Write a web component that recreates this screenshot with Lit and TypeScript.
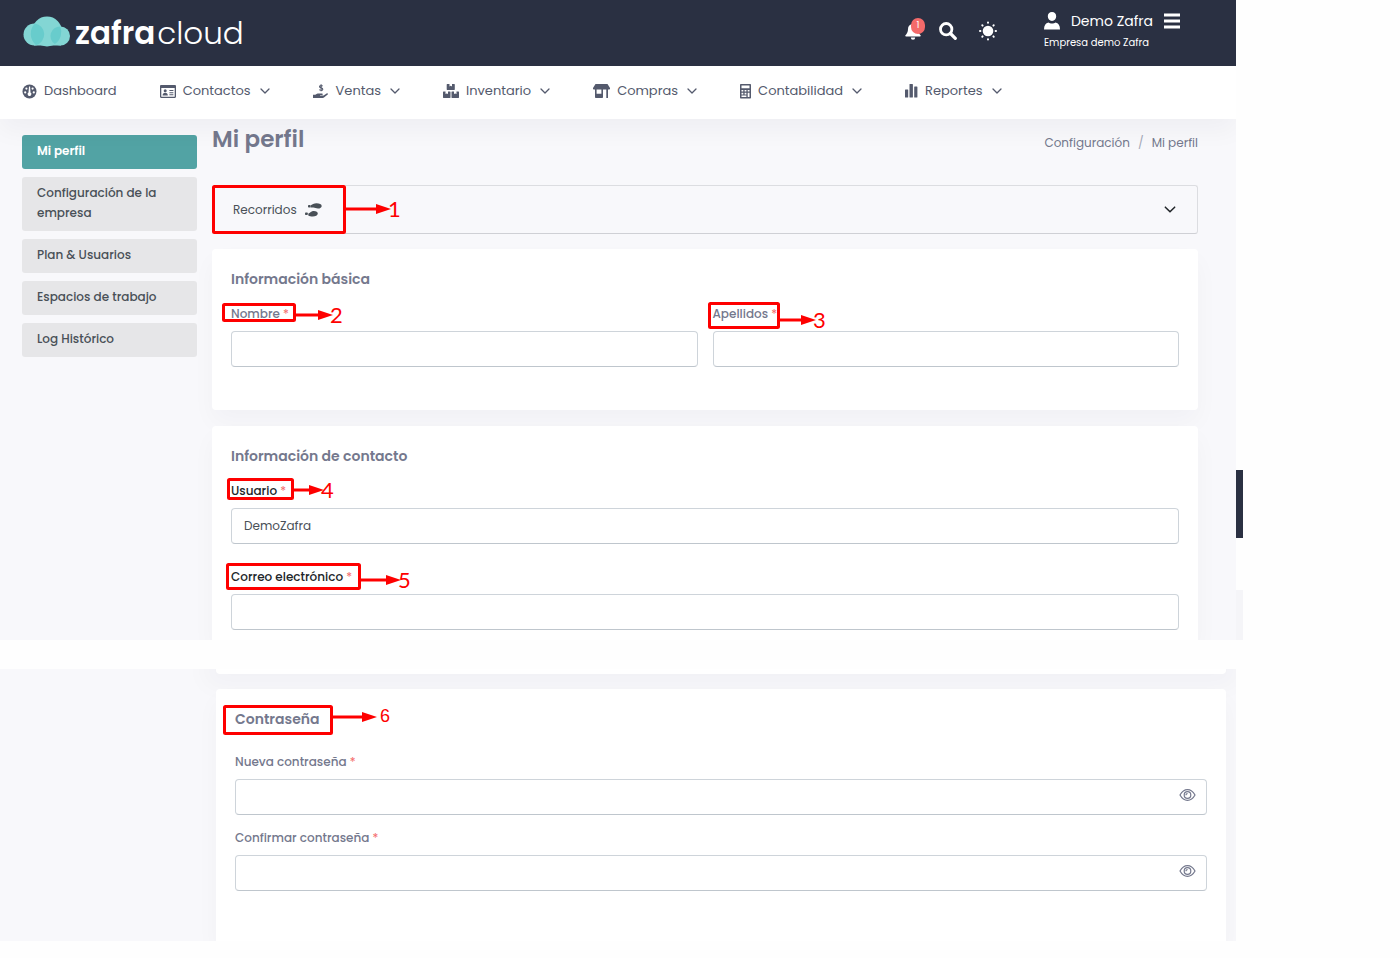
import { LitElement, html, css, svg, nothing } from "lit";
import { customElement, property } from "lit/decorators.js";

const chevron = html`<svg class="chev" viewBox="0 0 10 6" aria-hidden="true"><path d="M1 1l4 4 4-4" fill="none" stroke="currentColor" stroke-width="1.3" stroke-linecap="round" stroke-linejoin="round"/></svg>`;

const icons: Record<string, unknown> = {
  dashboard: svg`<circle cx="7.5" cy="7.5" r="7"/><g fill="#fff"><circle cx="3.2" cy="8.4" r="1.1"/><circle cx="4.4" cy="4.6" r="1.1"/><circle cx="10.6" cy="4.6" r="1.1"/><circle cx="11.8" cy="8.4" r="1.1"/><path d="M7 2.6h1.1l.4 5.8a1.9 1.9 0 1 1-2 0z"/></g>`,
  contacts: svg`<path fill-rule="evenodd" d="M1.200 1h13.600c.7 0 1.200.5 1.200 1.200v10.600c0 .7-.5 1.200-1.200 1.200H1.200C.5 14 0 13.500 0 12.800V2.200C0 1.500.5 1 1.200 1zM1.300 4v8.700h13.400V4z"/><circle cx="5.200" cy="6.700" r="1.500"/><path d="M2.600 11.400c0-1.600 1-2.600 2.600-2.600s2.600 1 2.600 2.600zM9.400 6h4v1h-4zM9.400 8.200h4v1h-4zM9.400 10.300h4v1h-4z"/>`,
  sales: svg`<path d="M0 10.800h2.300c1.200-1 2.200-1.300 3.400-1.300h3.200c1.300 0 1.300 1.500 0 1.500H7v.5h3.600l3-2.100c1-.6 1.900.5 1.100 1.200l-3.400 2.700c-.5.400-1 .6-1.600.6H0z"/><path d="M9.600 2.200C9 1.500 6.500 1.200 6.500 2.700c0 1.600 3.300.8 3.300 2.500 0 1.500-2.600 1.400-3.500.5M8.100.300v7" fill="none" stroke="currentColor" stroke-width="1.100"/>`,
  inventory: svg`<path d="M4.200 0h2.300v2.400l1.200-.7 1.300.7V0h2.300c.3 0 .5.200.5.500v5c0 .3-.2.500-.5.500H4.200c-.3 0-.5-.2-.5-.5v-5c0-.3.200-.5.500-.5zM.5 7.500h2v2.600l1.300-.7 1.200.7V7.500h2c.3 0 .5.200.5.500v5.500c0 .3-.2.500-.5.500H.5c-.3 0-.5-.2-.5-.5V8c0-.3.200-.5.500-.5zM9 7.500h2v2.600l1.200-.7 1.300.7V7.500h2c.3 0 .5.200.5.500v5.500c0 .3-.2.500-.5.500H9c-.3 0-.5-.2-.5-.5V8c0-.3.200-.5.500-.5z"/>`,
  purchases: svg`<path fill-rule="evenodd" d="M2.500 0h12L17 4c.4.700 0 1.500-.8 1.500H.8C0 5.500-.4 4.700 0 4zM2 5.500h1.600v4.300h4.800V5.500H10v7.700c0 .4-.3.800-.8.800H2.800c-.5 0-.8-.4-.8-.8zM13.300 5.500H15V14h-1.700z"/>`,
  accounting: svg`<path fill-rule="evenodd" d="M1 0h9c.6 0 1 .4 1 1v12.500c0 .6-.4 1-1 1H1c-.6 0-1-.4-1-1V1c0-.6.400-1 1-1zM1.500 1.600v2.700h8V1.600zM1.500 6v1.600h1.800V6zM4.600 6v1.600h1.800V6zM7.700 6v1.600h1.800V6zM1.500 8.800v1.600h1.800V8.800zM4.600 8.800v1.600h1.800V8.800zM7.700 8.800v4.200h1.800V8.800zM1.500 11.500V13h4.900v-1.500z"/>`,
  reports: svg`<rect x="0" y="5.500" width="3.200" height="8" rx=".5"/><rect x="4.500" y="0" width="3.400" height="13.500" rx=".5"/><rect x="9.200" y="2.500" width="3.200" height="11" rx=".5"/>`,
};

const nav = [
  { text: "Dashboard", icon: "dashboard", w: 15, menu: false },
  { text: "Contactos", icon: "contacts", w: 16, menu: true },
  { text: "Ventas", icon: "sales", w: 16, menu: true },
  { text: "Inventario", icon: "inventory", w: 16, menu: true },
  { text: "Compras", icon: "purchases", w: 17, menu: true },
  { text: "Contabilidad", icon: "accounting", w: 11, menu: true },
  { text: "Reportes", icon: "reports", w: 13, menu: true },
];

const side = ["Mi perfil", "Configuración de la empresa", "Plan & Usuarios", "Espacios de trabajo", "Log Histórico"];

/** Red frame, arrow and number laid over the element that it explains. */
@customElement("call-out")
export class CallOut extends LitElement {
  @property() n = "";
  @property({ type: Number }) w = 0;
  @property({ type: Number }) h = 0;
  @property({ type: Number }) len = 40;
  @property({ type: Number }) at = 10;

  static styles = css`
    :host { position: absolute; pointer-events: none; z-index: 2; }
    svg { display: block; overflow: visible; }
    rect { fill: none; stroke: #fe0000; stroke-width: 3; }
    line { stroke: #fe0000; stroke-width: 3; }
    path { fill: #fe0000; }
    text { fill: #fe0000; font: 400 22px Lato, sans-serif; }
    .plain { font: 400 18px "Liberation Sans", sans-serif; }
  `;

  render() {
    const { w, h, len, at, n } = this;
    const end = w + len;
    return html`<svg width=${w} height=${h}>
      <rect x="1.500" y="1.500" width=${w - 3} height=${h - 3} rx="1" />
      <line x1=${w} y1=${at} x2=${end - 13} y2=${at} />
      <path d="M${end - 15} ${at - 5}L${end} ${at}L${end - 15} ${at + 5}z" />
      <text class=${n === "6" ? "plain" : ""} x=${n === "6" ? end + 3 : end - 3} y=${at + (n === "6" ? 5 : 8)}>${n}</text>
    </svg>`;
  }
}

@customElement("app-root")
export class AppRoot extends LitElement {
  static styles = css`
    :host { display: block; background: #fefefe; font: 12px/20px Poppins, Inter, sans-serif; font-feature-settings: "cv11"; color: #495057; }
    * { box-sizing: border-box; }
    a { color: inherit; text-decoration: none; }
    button { font: inherit; font-feature-settings: inherit; color: inherit; border: 0; background: none; padding: 0; cursor: pointer; text-align: left; }
    svg { display: block; flex: none; }
    h1, h2 { margin: 0; font-weight: 600; color: #74788d; }
    .page { padding-right: 164px; min-height: 958px; }

    .top { height: 66px; background: #2a3042; color: #fff; display: flex; align-items: center; justify-content: space-between; padding: 0 56px 0 23px; }
    .logo { display: flex; align-items: center; gap: 5px; font-size: 31px; line-height: 40px; }
    .logo svg { margin-bottom: 2px; }
    .logo div { display: flex; gap: 2px; }
    .logo b { font-weight: 600; }
    .logo span { font-weight: 300; }
    .tools { display: flex; align-items: center; gap: 18px; padding-bottom: 4px; }
    .bell { position: relative; }
    .badge { position: absolute; right: -4px; top: -5px; width: 14px; height: 16px; border-radius: 8px; background: #f46a6a; font-size: 9px; line-height: 15px; text-align: center; }
    .user { margin-left: 25px; }
    .who { display: flex; align-items: center; gap: 11px; font-size: 14px; line-height: 24px; }
    .firm { font-size: 10px; line-height: 20px; }

    nav { height: 53px; background: #fff; display: flex; align-items: center; gap: 43px; padding: 0 22px 3px; color: #545a6d; box-shadow: 0 12px 24px rgba(18, 38, 63, .04); clip-path: inset(0 0 -40px 0); position: relative; z-index: 1; font-size: 13px; }
    nav a { display: flex; align-items: center; gap: 7px; white-space: nowrap; }
    nav svg { fill: currentColor; }
    .chev { width: 10px; height: 6px; margin-left: 2px; }

    .pane { background: #f8f8fb; display: grid; grid-template-columns: 175px minmax(0, 1fr); position: relative; }
    .first { padding: 0 38px 0 22px; column-gap: 15px; clip-path: inset(0 -7px 0 0); }
    .side { display: flex; flex-direction: column; gap: 8px; padding-top: 16px; }
    .side a { background: #e6e6e8; border-radius: 3px; padding: 6px 15px 8px; font-weight: 500; }
    .side a.on { background: #52a3a4; color: #fff; font-weight: 600; }
    .head { display: flex; justify-content: space-between; height: 66px; }
    h1 { font-size: 23px; line-height: 41px; }
    .crumbs { display: flex; gap: 8px; color: #74788d; line-height: 48px; }
    .crumbs i { font-style: normal; color: #a6a9b8; }

    .acc { position: relative; border: 1px solid #dcdde1; border-bottom-color: #cfd0d5; border-radius: 3px; margin-bottom: 15px; }
    .acc button { width: 100%; height: 47px; display: flex; align-items: center; padding: 0 21px 0 20px; gap: 8px; }
    .acc .chev { width: 12px; height: 7px; margin-left: auto; color: #212529; }

    .card { background: #fff; border-radius: 4px; padding: 19px; box-shadow: 0 12px 24px rgba(18, 38, 63, .03); }
    .basic { padding-bottom: 43px; margin-bottom: 16px; }
    .contact { padding-bottom: 10px; border-radius: 4px 4px 0 0; }
    h2 { font-size: 14px; line-height: 22px; margin-bottom: 15px; position: relative; }
    .cols { display: grid; grid-template-columns: 1fr 1fr; gap: 15px; }
    .fields { display: grid; gap: 24px; }
    .field { position: relative; }
    .name { display: block; line-height: 18px; margin-bottom: 8px; color: #74788d; font-weight: 500; }
    .dark .name { color: #212529; }
    .name em { color: #f46a6a; font-style: normal; font-weight: 400; }
    input { display: block; width: 100%; height: 36px; border: 1px solid #ced4da; border-bottom-color: #bfc6cd; border-radius: 4px; background: #fff; padding: 0 12px; font: inherit; font-feature-settings: inherit; color: #495057; outline: 0; }
    .box { position: relative; }
    .eye { position: absolute; right: 11px; top: 9px; }

    .edge { position: absolute; left: 100%; width: 7px; }
    .bar { bottom: 102px; height: 68px; background: #2a3042; }
    .strip { bottom: 0; height: 50px; background: #f5f5f8; }

    .second { margin-top: 29px; padding-right: 10px; grid-template-columns: 216px minmax(0, 1fr); overflow: hidden; }
    .second > div { grid-column: 2; }
    .tail { height: 5px; background: #fff; border-radius: 0 0 4px 4px; margin-bottom: 15px; box-shadow: 0 0 24px 12px rgba(18, 38, 63, .03); }
    .pass { padding-bottom: 50px; border-radius: 4px 4px 0 0; }
    .pass h2 { margin-bottom: 23px; }
    .pass .fields { gap: 14px; }

    .c1 { left: -1px; top: -1px; }
    .c2 { left: -9px; top: -2px; }
    .c3 { left: -5px; top: -3px; }
    .c4 { left: -4px; top: -4px; }
    .c5 { left: -5px; top: -5px; }
    .c6 { left: -12px; top: -3px; }
  `;

  private field(id: string, label: string, note: unknown, value = "", type = "text") {
    return html`<div class="field">
      <label class="name" for=${id}>${label} <em>*</em></label>
      <div class="box">
        <input id=${id} type=${type} .value=${value} />
        ${type === "password"
          ? html`<button class="eye" aria-label="Mostrar"><svg width="17" height="14" viewBox="0 0 17 14" fill="none" stroke="#74788d" stroke-width="1.200"><path d="M1 7c2-3.600 4.500-5.400 7.500-5.400S14 3.400 16 7c-2 3.600-4.500 5.400-7.500 5.400S3 10.600 1 7z"/><circle cx="8.500" cy="7" r="3.300"/><path d="M7 7.200A1.600 1.600 0 0 1 8.600 5.500"/></svg></button>`
          : nothing}
      </div>
      ${note}
    </div>`;
  }

  render() {
    return html`<div class="page">
      <header class="top">
        <a class="logo" href="#">
          <svg width="47" height="32" viewBox="0 0 47 32"><g fill="#83d6d4"><circle cx="11.500" cy="18.500" r="11"/><circle cx="24" cy="15.500" r="15"/><circle cx="37.500" cy="20" r="9.500"/><rect x="11" y="20" width="27" height="9.500"/></g><g fill="#68cccc"><path d="M12 7.500a11 11 0 0 1 1 21.500 14.500 14.500 0 0 1-1-21.500z"/><path d="M37.300 10.500a9.500 9.500 0 0 0-5.500 17.500A14.500 14.500 0 0 0 37.300 10.500z"/></g></svg>
          <div><b>zafra</b><span>cloud</span></div>
        </a>
        <div class="tools">
          <button class="bell" aria-label="Notificaciones"><svg width="16" height="17" viewBox="0 0 16 17" fill="#fff"><path d="M8 0c.6 0 1 .4 1 1 2.500.5 4 2.400 4 5 0 3 1 4.500 2.500 6.200.6.700.2 1.300-.6 1.300H1.100c-.8 0-1.200-.6-.6-1.300C2 10.500 3 9 3 6c0-2.600 1.500-4.500 4-5 0-.6.400-1 1-1zM5.800 14.600h4.400a2.200 2.200 0 0 1-4.400 0z"/></svg><span class="badge">1</span></button>
          <button aria-label="Buscar"><svg width="18" height="18" viewBox="0 0 18 18" fill="none" stroke="#fff"><circle cx="7.200" cy="7.200" r="5.700" stroke-width="2.800"/><path d="M11.500 11.500l4.800 4.800" stroke-width="3.200" stroke-linecap="round"/></svg></button>
          <button aria-label="Tema"><svg width="26" height="20" viewBox="0 0 26 20" fill="#fff"><circle cx="13" cy="10" r="5.300"/><g stroke="#fff" stroke-width="2" stroke-linecap="round"><path d="M13 1.400v.4M13 18.200v.4M5 10h.4M20.600 10h.4M7.300 4.300l.3.300M18.400 15.400l.3.300M7.300 15.700l.3-.3M18.400 4.600l.3-.3"/></g></svg></button>
          <div class="user">
            <div class="who"><svg width="16" height="18" viewBox="0 0 16 18" fill="#fff"><path d="M8 0c2.600 0 4.200 1.700 4.200 4.300S10.600 9 8 9 3.800 6.900 3.800 4.300 5.400 0 8 0zM0 17.500c0-4 1.500-6.500 4.500-7 1 .6 2 1 3.500 1s2.500-.4 3.500-1c3 .5 4.500 3 4.500 7z"/></svg><span>Demo Zafra</span><svg width="16" height="16" viewBox="0 0 16 16" fill="#fff"><path d="M0 .500h16v3H0zM0 6.500h16v3H0zM0 12.500h16v3H0z"/></svg></div>
            <div class="firm">Empresa demo Zafra</div>
          </div>
        </div>
      </header>
      <nav>
        ${nav.map((i) => html`<a href="#"><svg width=${i.w} height="15" viewBox="0 0 ${i.w} 15">${icons[i.icon]}</svg><span>${i.text}</span>${i.menu ? chevron : nothing}</a>`)}
      </nav>
      <main>
        <section class="pane first">
          <div class="side">${side.map((t, i) => html`<a href="#" class=${i ? "" : "on"}>${t}</a>`)}</div>
          <div>
            <div class="head">
              <h1>Mi perfil</h1>
              <div class="crumbs"><a href="#">Configuración</a><i>/</i><span>Mi perfil</span></div>
            </div>
            <div class="acc">
              <button><span>Recorridos</span><svg width="17" height="14" viewBox="0 0 17 14" fill="#495057"><path d="M5.500 2.500C7 1.200 9 .200 11.500.200c3 0 5.200 1 5.200 2.800 0 1.500-1.500 2.600-3.700 2.600-2 0-3-1-4.700-1H5.500z"/><rect x="3" y="2" width="2.500" height="2.600" rx=".8"/><path d="M3.300 10.500c1.500 0 2.500-2.500 5.500-2.500 2.500 0 4 .9 4 2.500 0 2-2.400 3-5 3-2 0-3.500-.4-4.500-1z"/><rect x="0" y="9.500" width="2.800" height="2.500" rx=".8"/></svg>${chevron}</button>
              <call-out class="c1" n="1" w="134" h="49" len="45" at="24"></call-out>
            </div>
            <div class="card basic">
              <h2>Información básica</h2>
              <div class="cols">
                ${this.field("nombre", "Nombre", html`<call-out class="c2" n="2" w="74" h="19" len="37" at="12"></call-out>`)}
                ${this.field("apellidos", "Apellidos", html`<call-out class="c3" n="3" w="72" h="27" len="36" at="18"></call-out>`)}
              </div>
            </div>
            <div class="card contact">
              <h2>Información de contacto</h2>
              <div class="fields dark">
                ${this.field("usuario", "Usuario", html`<call-out class="c4" n="4" w="67" h="22" len="30" at="12"></call-out>`, "DemoZafra")}
                ${this.field("correo", "Correo electrónico", html`<call-out class="c5" n="5" w="135" h="27" len="40" at="17"></call-out>`)}
              </div>
            </div>
          </div>
          <div class="edge bar"></div>
          <div class="edge strip"></div>
        </section>
        <section class="pane second">
          <div>
            <div class="tail"></div>
            <div class="card pass">
              <h2>Contraseña<call-out class="c6" n="6" w="110" h="30" len="44" at="12"></call-out></h2>
              <div class="fields">
                ${this.field("nueva", "Nueva contraseña", nothing, "", "password")}
                ${this.field("confirmar", "Confirmar contraseña", nothing, "", "password")}
              </div>
            </div>
          </div>
        </section>
      </main>
    </div>`;
  }
}
